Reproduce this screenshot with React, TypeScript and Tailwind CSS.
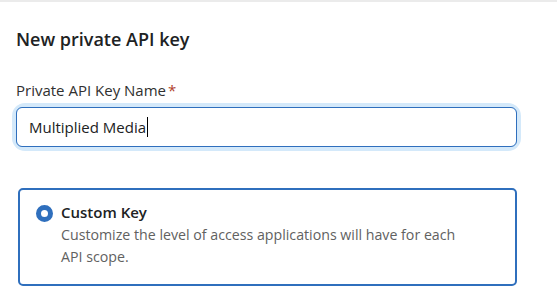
export default function App() {
  return (
    <div className="h-[302px] w-[557px] overflow-hidden border-t-2 border-[#ebebeb] bg-white font-['Open_Sans',sans-serif] text-[#202223]">
      <div className="pl-4 pr-10 pt-[25px]">
        <h1 className="text-[18px] font-semibold leading-6">New private API key</h1>

        <label className="mt-[29px] block text-[15px] leading-5 text-[#303030]">
          Private API Key Name<span className="ml-[2px] text-[#b0412a]">*</span>
        </label>
        <div className="mt-[7px] rounded-[9px] ring-4 ring-[#d4e9fa]">
          <div className="flex h-[40px] items-center rounded-[6px] border-[1.5px] border-[#2f6fbd] px-3 text-[15px]">
            <span>Multiplied Media</span>
            <span className="ml-px h-[20px] w-px bg-black" />
          </div>
        </div>

        <div className="mt-[41px] ml-[2px] flex gap-2 rounded-[5px] border-2 border-[#2f6fbd] px-4 pb-[16px] pt-[12px]">
          <span className="mt-[3px] h-[17px] w-[17px] shrink-0 rounded-full border-[5px] border-[#2f6fbd] bg-white" />
          <div>
            <div className="text-[15px] font-semibold leading-5">Custom Key</div>
            <div className="mt-[2px] max-w-[410px] text-[14.2px] leading-[22px] text-[#616161]">
              Customize the level of access applications will have for each API scope.
            </div>
          </div>
        </div>
      </div>
    </div>
  );
}
